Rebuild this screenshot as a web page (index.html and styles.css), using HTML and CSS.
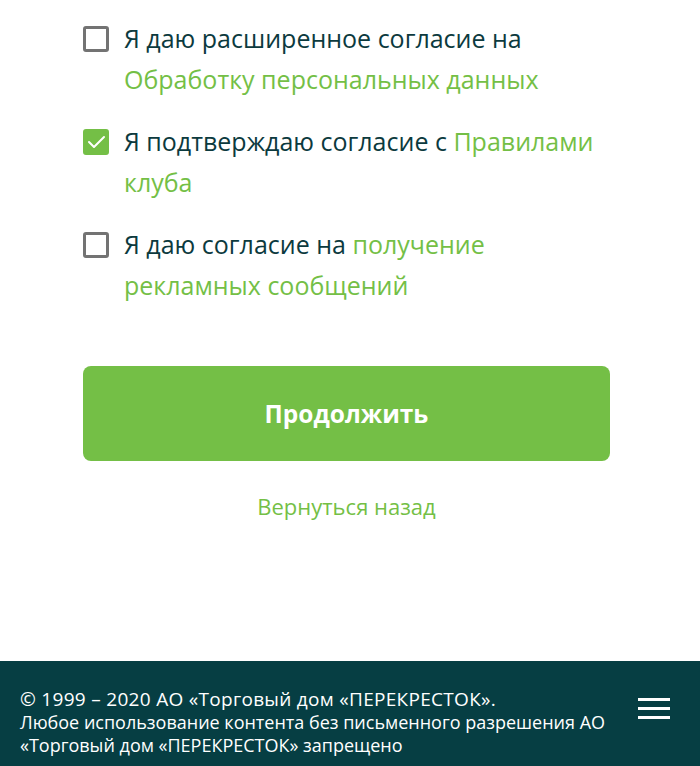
FILE: index.html
```html
<!DOCTYPE html>
<html lang="ru">
<head>
<meta charset="utf-8">
<link rel="stylesheet" href="styles.css">
</head>
<body>
<div class="page">
  <main class="content">
    <div class="consents">
      <label class="consent">
        <span class="box"></span>
        <span class="text">Я даю расширенное согласие на <a class="link" href="#">Обработку персональных данных</a></span>
      </label>
      <label class="consent">
        <span class="box checked">
          <svg viewBox="0 0 26 26" width="26" height="26"><path d="M6 13 L11 18 L21 8" fill="none" stroke="#fff" stroke-width="2" stroke-linecap="round" stroke-linejoin="round"/></svg>
        </span>
        <span class="text">Я подтверждаю согласие с <a class="link" href="#">Правилами клуба</a></span>
      </label>
      <label class="consent">
        <span class="box"></span>
        <span class="text">Я даю согласие на <a class="link" href="#">получение рекламных сообщений</a></span>
      </label>
    </div>
    <button class="btn">Продолжить</button>
    <a class="back" href="#">Вернуться назад</a>
  </main>
  <footer class="footer">
    <div class="footer-text">
      <div class="copy">© 1999 – 2020 АО «Торговый дом «ПЕРЕКРЕСТОК».</div>
      <div class="note">Любое использование контента без письменного разрешения АО «Торговый дом «ПЕРЕКРЕСТОК» запрещено</div>
    </div>
    <div class="menu" aria-label="Меню">
      <span></span><span></span><span></span>
    </div>
  </footer>
</div>
</body>
</html>
```

FILE: styles.css
```css
html, body {
  margin: 0;
  padding: 0;
  background: #fff;
}
body {
  font-family: "Open Sans", "Noto Sans", sans-serif;
  color: #0c3a3e;
}
.page {
  min-height: 100vh;
  display: flex;
  flex-direction: column;
}
.content {
  padding: 18px 75px 0 83px;
  display: flex;
  flex-direction: column;
}
.consents {
  display: flex;
  flex-direction: column;
  gap: 21px;
}
.consent {
  display: flex;
  align-items: flex-start;
  gap: 15px;
  font-size: 25px;
  line-height: 41px;
}
.box {
  flex: none;
  width: 26px;
  height: 26px;
  box-sizing: border-box;
  border: 3px solid #737373;
  border-radius: 3px;
  margin-top: 8px;
  display: flex;
  align-items: center;
  justify-content: center;
}
.box.checked {
  background: #74bf46;
  border-color: #74bf46;
}
.box svg {
  flex: none;
}
.text {
  flex: 1;
}
.link {
  color: #74bf46;
  text-decoration: none;
}
.btn {
  margin-top: 60px;
  width: 527px;
  height: 95px;
  border: none;
  border-radius: 8px;
  background: #74bf46;
  color: #fff;
  font-family: "Open Sans", "Noto Sans", sans-serif;
  font-weight: 700;
  font-size: 24.5px;
}
.back {
  align-self: flex-start;
  width: 527px;
  text-align: center;
  margin-top: 30px;
  font-size: 22px;
  line-height: 30px;
  color: #74bf46;
  text-decoration: none;
}
.footer {
  margin-top: auto;
  background: #063e43;
  color: #fff;
  display: flex;
  align-items: flex-start;
  justify-content: space-between;
  padding: 27px 30px 9px 20px;
  font-family: "Open Sans", "Noto Sans", sans-serif;
}
.footer-text {
  width: 600px;
}
.copy {
  font-size: 19px;
  line-height: 23px;
  letter-spacing: 0.3px;
}
.note {
  font-size: 18px;
  line-height: 23px;
}
.menu {
  margin-top: 10px;
  width: 32px;
  display: flex;
  flex-direction: column;
  gap: 6px;
}
.menu span {
  display: block;
  height: 3px;
  background: #fff;
}
```
